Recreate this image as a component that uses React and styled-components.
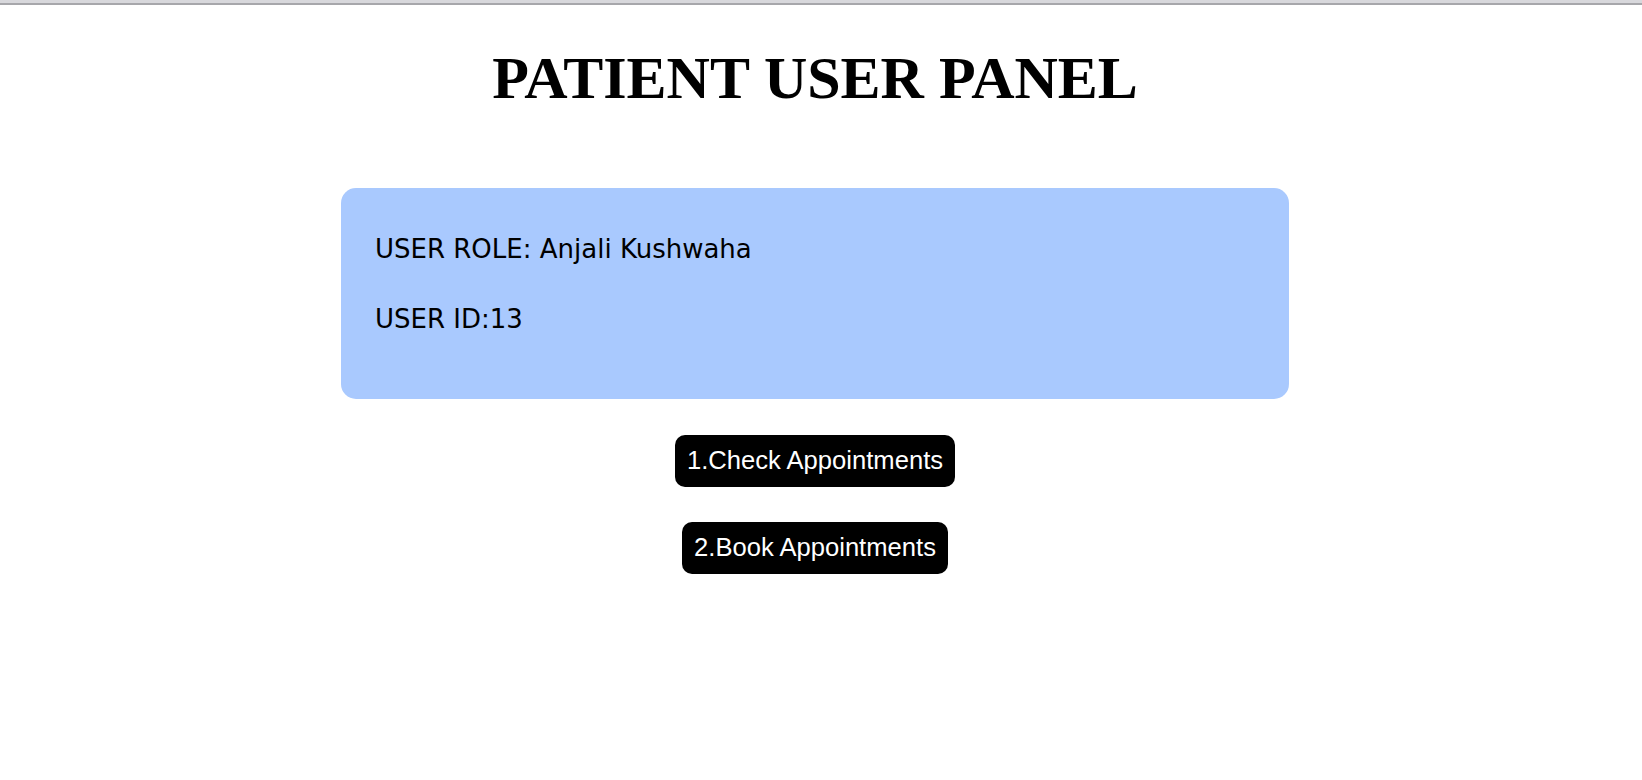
import styled, { createGlobalStyle } from "styled-components";

const GlobalStyle = createGlobalStyle`
    body {
        margin: 0;
        background: #ffffff;
    }
`;

const TopEdge = styled.div`
    height: 3px;
    background: #d8d8dc;
    border-bottom: 2px solid #a7a7ab;
`;

const Page = styled.div`
    display: flex;
    flex-direction: column;
    align-items: center;
    padding-right: 12px;
`;

const Title = styled.h1`
    margin: 40px 0 0;
    font-family: "Liberation Serif", "Times New Roman", serif;
    font-size: 60px;
    line-height: 66px;
    font-weight: bold;
    color: #000;
`;

const InfoCard = styled.div`
    box-sizing: border-box;
    width: 948px;
    margin-top: 77px;
    padding: 46px 34px 65px;
    display: flex;
    flex-direction: column;
    gap: 40px;
    background: #a9c9fe;
    border-radius: 15px;
`;

const InfoLine = styled.p`
    margin: 0;
    font-family: Tahoma, "DejaVu Sans", sans-serif;
    font-size: 26px;
    line-height: 30px;
    color: #000;
`;

const Actions = styled.div`
    display: flex;
    flex-direction: column;
    align-items: center;
    gap: 35px;
    margin-top: 36px;
`;

const ActionButton = styled.button`
    padding: 10px 12px 12px;
    border: none;
    border-radius: 10px;
    background: #000;
    color: #fff;
    font-family: "Liberation Sans", Arial, sans-serif;
    font-size: 25.6px;
    line-height: 30px;
    cursor: pointer;
`;

export default function App() {
    const user = { role: "Anjali Kushwaha", id: 13 };

    return (
        <>
            <GlobalStyle />
            <TopEdge />
            <Page>
                <Title>PATIENT USER PANEL</Title>
                <InfoCard>
                    <InfoLine>USER ROLE: {user.role}</InfoLine>
                    <InfoLine>USER ID:{user.id}</InfoLine>
                </InfoCard>
                <Actions>
                    <ActionButton>1.Check Appointments</ActionButton>
                    <ActionButton>2.Book Appointments</ActionButton>
                </Actions>
            </Page>
        </>
    );
}
